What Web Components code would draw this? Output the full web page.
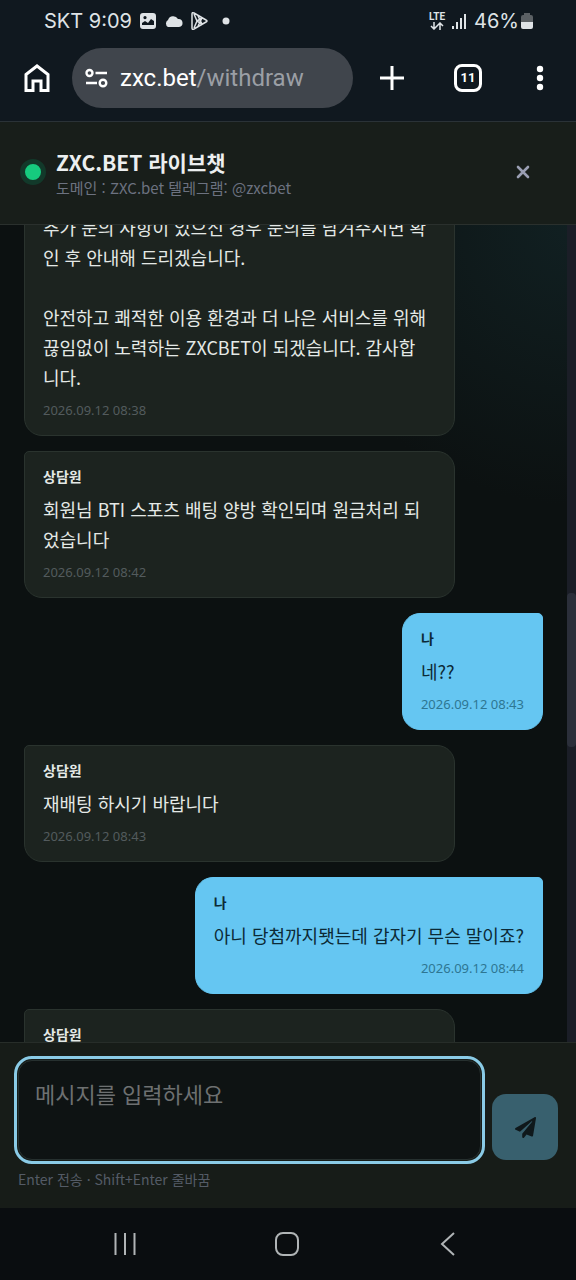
<!DOCTYPE html>
<html lang="ko">
<head>
<meta charset="utf-8">
<meta name="viewport" content="width=device-width, initial-scale=1">
<title>ZXC.BET 라이브챗</title>
<style>
  html, body { margin: 0; background: #0a0d10; }
  body { font-family: "Noto Sans CJK KR", "Noto Sans", sans-serif; color: #e4e9e6; }
</style>
</head>
<body>
<chat-screen></chat-screen>

<template id="status-bar">
  <style>
    :host { display: flex; align-items: center; justify-content: space-between; height: 42px; padding: 0 43px 0 44px; font: 20px/24px Inter, Roboto, sans-serif; color: #dfe3e6; }
    div { display: flex; align-items: center; }
    .left { gap: 7px; }
    .right { gap: 7px; }
    .lte { display: flex; flex-direction: column; align-items: center; font: 700 10px/10px Roboto, sans-serif; }
    .pct { gap: 2px; }
    svg { display: block; fill: currentColor; }
    .dot { margin-left: 6px; }
  </style>
  <div class="left">
    <span>SKT 9:09</span>
    <svg width="18" height="18" viewBox="0 0 18 18"><path fill-rule="evenodd" d="M4 1h10a3 3 0 0 1 3 3v10a3 3 0 0 1-3 3H4a3 3 0 0 1-3-3V4a3 3 0 0 1 3-3zM3 13h12V9l-3-2-3 4-3-2-3 2zM6 4a1.600 1.600 0 1 0 .01 0z"/></svg>
    <svg width="19" height="12" viewBox="0 0 19 12"><path d="M4 12a4 4 0 0 1 0-7 5.500 5.500 0 0 1 10-1 4 4 0 0 1 1 8z"/></svg>
    <svg width="19" height="20" viewBox="0 0 19 20"><path d="M2 3q0-2 2-1l12 7q2 1 0 2L4 18q-2 1-2-1zM4 3l3 7-3 7M7 10l5-3M7 10l5 3M8 5l4 8M8 15l4-8" fill="none" stroke="currentColor" stroke-width="1.500"/></svg>
    <svg class="dot" width="8" height="8" viewBox="0 0 8 8"><circle cx="4" cy="4" r="3.500"/></svg>
  </div>
  <div class="right">
    <span class="lte">LTE
      <svg width="14" height="8" viewBox="0 0 14 8"><path d="M4 0v7M1 4l3 3 3-3M10 8V1M7 4l3-3 3 3" fill="none" stroke="currentColor" stroke-width="1.500"/></svg>
    </span>
    <svg width="15" height="16" viewBox="0 0 15 16"><path d="M0 13h2v3H0zM4 9h2v7H4zM8 5h2v11H8zM12 1h2v15h-2z"/></svg>
    <div class="pct"><span>46%</span>
      <svg width="12" height="16" viewBox="0 0 12 16"><path fill="#5b6064" d="M3 0h6v2h1q2 0 2 2v6H0V4q0-2 2-2h1z"/><path d="M0 9h12v5q0 2-2 2H2q-2 0-2-2z"/></svg>
    </div>
  </div>
</template>

<template id="browser-bar">
  <style>
    :host { display: flex; align-items: center; box-sizing: border-box; height: 79px; padding: 0 23px 7px; }
    button { display: grid; place-items: center; padding: 0; border: 0; background: none; color: #fff; font: inherit; }
    svg { display: block; fill: none; stroke: currentColor; }
    .home { width: 27px; }
    .url { flex: 1; display: flex; align-items: center; gap: 12px; height: 60px; margin-left: 22px; padding-left: 13px; border-radius: 30px; background: #40454c; color: #fff; font: 24px/28px Roboto, sans-serif; text-decoration: none; min-width: 0; }
    .url i { font-style: normal; color: #9b9fa5; }
    .plus { width: 26px; margin-left: 26px; }
    .tabs { width: 28px; height: 28px; margin-left: 49px; box-sizing: border-box; border: 3px solid #fff; border-radius: 8px; font: 700 13px/16px Roboto, sans-serif; }
    .more { width: 8px; margin-left: 54px; margin-right: 9px; }
  </style>
  <button class="home" aria-label="홈"><svg width="26" height="28" viewBox="0 0 26 28" stroke-width="3"><path d="M2 10.500L13 2l11 8.500V26.500H17V17H9v9.500H2z"/></svg></button>
  <a class="url" href="#"><svg width="23" height="20" viewBox="0 0 23 20" stroke-width="2.400"><circle cx="4.500" cy="5" r="3"/><path d="M10.500 5H22M1 15h11"/><circle cx="18" cy="15" r="3.300"/></svg><span>zxc.bet<i>/withdraw</i></span></a>
  <button class="plus" aria-label="새 탭"><svg width="24" height="24" viewBox="0 0 24 24" stroke-width="3"><path d="M12 0v24M0 12h24"/></svg></button>
  <button class="tabs" aria-label="탭">11</button>
  <button class="more" aria-label="메뉴"><svg width="8" height="26" viewBox="0 0 8 26"><g fill="#fff" stroke="none"><circle cx="4" cy="4" r="3.200"/><circle cx="4" cy="13" r="3.200"/><circle cx="4" cy="22" r="3.200"/></g></svg></button>
</template>

<template id="chat-header">
  <style>
    :host { display: flex; align-items: center; box-sizing: border-box; height: 104px; padding: 0 43px 2px 20px; background: #181e1a; border-top: 1px solid #2a3237; border-bottom: 1px solid #2a302d; }
    .dot { box-sizing: border-box; width: 26px; height: 26px; border: 5px solid #12392a; border-radius: 50%; background: #16ca7e; }
    .names { flex: 1; margin-left: 10px; padding-top: 4px; }
    h1 { margin: 0; font-size: 21px; line-height: 28px; font-weight: 700; color: #eceff0; }
    p { margin: 0; font-size: 15px; line-height: 24px; color: #6c7280; }
    button { padding: 3px; border: 0; background: none; color: #9a9fb3; }
    svg { display: block; }
  </style>
  <span class="dot"></span>
  <div class="names"><h1><slot name="title"></slot></h1><p><slot name="sub"></slot></p></div>
  <button aria-label="닫기"><svg width="14" height="14" viewBox="0 0 14 14" fill="none" stroke="currentColor" stroke-width="2.600" stroke-linecap="round"><path d="M2 2l10 10M12 2L2 12"/></svg></button>
</template>

<template id="chat-log">
  <style>
    :host { display: flex; flex: 1; min-height: 0; background: radial-gradient(circle at 100% 0, #112022 0, #0c1111 280px); }
    .list { flex: 1; display: flex; flex-direction: column; gap: 15px; padding: 0 24px; overflow-y: auto; scrollbar-width: none; }
    .rail { width: 9px; display: flex; flex-direction: column; background: #1b1e27; }
    .above { flex: 368; }
    .thumb { flex: 154; border-radius: 4px; background: #2b2f3a; }
    .below { flex: 295; }
  </style>
  <div class="list"><slot></slot></div>
  <div class="rail"><div class="above"></div><div class="thumb"></div><div class="below"></div></div>
</template>

<template id="chat-message">
  <style>
    :host { display: block; flex: none; box-sizing: border-box; align-self: flex-start; width: 83%; padding: 13px 18px 15px; border: 1px solid #2a332e; border-radius: 5px 18px 18px 18px; background: #1c231f; color: #e4e9e6; --time: #535b5d; }
    :host([mine]) { align-self: flex-end; width: auto; max-width: 83%; border-color: #65c6f2; background: #65c6f2; color: #0c2a36; border-radius: 18px 5px 18px 18px; --time: #2e7692; }
    b { display: block; margin-bottom: 7px; font-size: 14px; line-height: 22px; font-weight: 700; }
    b:empty { display: none; }
    p { margin: 0; min-height: 30px; font-size: 18px; line-height: 30px; white-space: pre-line; }
    time { display: block; margin-top: 8px; font: 13px/20px "Noto Sans", sans-serif; color: var(--time); }
    :host([mine]) time { text-align: right; }
  </style>
  <b></b><p><slot></slot></p><time></time>
</template>

<template id="chat-composer">
  <style>
    :host { display: block; box-sizing: border-box; height: 166px; padding: 17px 18px 0; background: #171c18; border-top: 1px solid #272d29; }
    .row { display: flex; align-items: flex-end; gap: 11px; }
    textarea { flex: 1; min-width: 0; box-sizing: border-box; height: 100px; padding: 16px; resize: none; border: 1px solid #26302f; border-radius: 14px; outline: 3px solid #8acbe6; outline-offset: 1px; background: #0e1313; color: #e4e9e6; font: 22px/32px "Noto Sans CJK KR", sans-serif; }
    textarea::placeholder { color: #6d7071; opacity: 1; }
    button { display: grid; place-items: center; width: 66px; height: 66px; padding: 0; border: 0; border-radius: 14px; background: #38606e; color: #0f181b; }
    label { display: block; margin-top: 8px; font-size: 14px; line-height: 22px; color: #545b66; }
  </style>
  <div class="row">
    <textarea id="msg" placeholder="메시지를 입력하세요"></textarea>
    <button aria-label="전송"><svg width="21" height="21" viewBox="0 0 512 512" fill="currentColor"><path d="M476 3.200L12.500 270.600c-18.100 10.400-15.800 35.600 2.200 43.200L121 358.400l287.300-253.200c5.500-4.900 13.300 2.600 8.600 8.300L176 407v80.500c0 23.600 28.500 32.900 42.500 15.800L282 426l124.600 52.200c14.200 6 30.400-2.900 33-18.200l72-432C515 7.800 493.300-6.800 476 3.200z"/></svg></button>
  </div>
  <label for="msg">Enter 전송 · Shift+Enter 줄바꿈</label>
</template>

<template id="nav-bar">
  <style>
    :host { display: flex; align-items: center; justify-content: space-between; height: 72px; padding: 0 116px 0 113px; background: #0a0d10; }
    button { padding: 0; border: 0; background: none; color: #b0b4b6; }
    svg { display: block; fill: none; stroke: currentColor; stroke-width: 2; }
  </style>
  <button aria-label="최근 앱"><svg width="24" height="24" viewBox="0 0 24 24"><path d="M2.500 1v22M12 1v22M21.500 1v22"/></svg></button>
  <button aria-label="홈 화면"><svg width="26" height="24" viewBox="0 0 26 24"><rect x="2" y="1" width="22" height="22" rx="7"/></svg></button>
  <button aria-label="뒤로"><svg width="24" height="24" viewBox="0 0 24 24"><path d="M18 1L6 12l12 11"/></svg></button>
</template>

<template id="chat-screen">
  <style>
    :host { display: flex; flex-direction: column; height: 100vh; background: #10181f; }
  </style>
  <status-bar></status-bar>
  <browser-bar></browser-bar>
  <chat-header><span slot="title">ZXC.BET 라이브챗</span><span slot="sub">도메인 : ZXC.bet 텔레그램: @zxcbet</span></chat-header>
  <chat-log scroll="27">
    <chat-message at="2026.09.12 08:38">추가 문의 사항이 있으신 경우 문의를 남겨주시면 확
인 후 안내해 드리겠습니다.

안전하고 쾌적한 이용 환경과 더 나은 서비스를 위해
끊임없이 노력하는 ZXCBET이 되겠습니다. 감사합
니다.</chat-message>
    <chat-message from="상담원" at="2026.09.12 08:42">회원님 BTI 스포츠 배팅 양방 확인되며 원금처리 되
었습니다</chat-message>
    <chat-message mine from="나" at="2026.09.12 08:43">네??</chat-message>
    <chat-message from="상담원" at="2026.09.12 08:43">재배팅 하시기 바랍니다</chat-message>
    <chat-message mine from="나" at="2026.09.12 08:44">아니 당첨까지됏는데 갑자기 무슨 말이죠?</chat-message>
    <chat-message from="상담원"></chat-message>
  </chat-log>
  <chat-composer></chat-composer>
  <nav-bar></nav-bar>
</template>

<script>
  class Part extends HTMLElement {
    constructor() {
      super();
      this.attachShadow({ mode: "open" }).append(document.getElementById(this.localName).content.cloneNode(true));
    }
  }
  class ChatMessage extends Part {
    connectedCallback() {
      this.shadowRoot.querySelector("b").textContent = this.getAttribute("from") || "";
      this.shadowRoot.querySelector("time").textContent = this.getAttribute("at") || "";
    }
  }
  class ChatLog extends Part {
    restore() {
      this.shadowRoot.querySelector(".list").scrollTop = Number(this.getAttribute("scroll"));
    }
  }
  customElements.define("chat-message", ChatMessage);
  customElements.define("chat-log", ChatLog);
  for (const name of ["status-bar", "browser-bar", "chat-header", "chat-composer", "nav-bar", "chat-screen"])
    customElements.define(name, class extends Part {});
  document.querySelector("chat-screen").shadowRoot.querySelector("chat-log").restore();
</script>
</body>
</html>
